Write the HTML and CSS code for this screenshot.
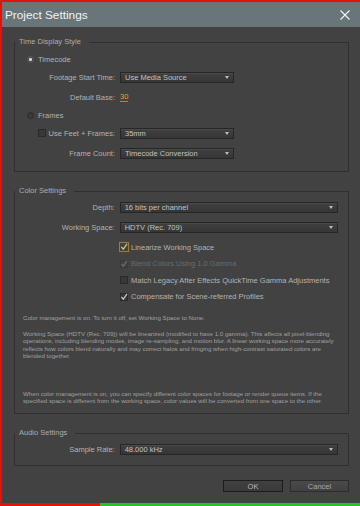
FILE: index.html
```html
<!DOCTYPE html>
<html lang="en">
<head>
    <meta charset="UTF-8">
    <meta name="viewport" content="width=device-width, initial-scale=1.0">
    <title>Project Settings</title>
    <link rel="stylesheet" href="styles.css">
</head>
<body>
    <div class="screen">
        <div class="window">
            <div class="titlebar">
                <span class="title">Project Settings</span>
                <svg class="close" viewBox="0 0 10 10" width="10" height="10">
                    <path d="M0.5 0.5 L9.5 9.5 M9.5 0.5 L0.5 9.5" stroke="#f4f4f4" stroke-width="1.1" fill="none"/>
                </svg>
            </div>

            <div class="dialog">
                <!-- time display -->
                <fieldset class="group time">
                    <legend>Time Display Style</legend>
                    <div class="row radio-row"><span class="radio on"></span>Timecode</div>
                    <div class="row">
                        <span class="label">Footage Start Time:</span>
                        <div class="select"><span>Use Media Source</span><span class="arrow"></span></div>
                    </div>
                    <div class="row loose">
                        <span class="label">Default Base:</span>
                        <span class="value">30</span>
                    </div>
                    <div class="row radio-row"><span class="radio"></span>Frames</div>
                    <div class="row">
                        <span class="label"><span class="check"></span>Use Feet + Frames:</span>
                        <div class="select"><span>35mm</span><span class="arrow"></span></div>
                    </div>
                    <div class="row loose">
                        <span class="label">Frame Count:</span>
                        <div class="select"><span>Timecode Conversion</span><span class="arrow"></span></div>
                    </div>
                </fieldset>

                <!-- color -->
                <fieldset class="group color">
                    <legend>Color Settings</legend>
                    <div class="row">
                        <span class="label">Depth:</span>
                        <div class="select wide"><span>16 bits per channel</span><span class="arrow"></span></div>
                    </div>
                    <div class="row loose">
                        <span class="label">Working Space:</span>
                        <div class="select wide"><span>HDTV (Rec. 709)</span><span class="arrow"></span></div>
                    </div>
                    <div class="row check-row first">
                        <span class="check focus"><svg viewBox="0 0 8 8"><path d="M1.3 3.8 L3.3 6.2 L7 0.8" stroke="#d8c48a" stroke-width="1.2" fill="none"/></svg></span>
                        Linearize Working Space
                    </div>
                    <div class="row check-row disabled">
                        <span class="check off"><svg viewBox="0 0 8 8"><path d="M1.3 3.8 L3.3 6.2 L7 0.8" stroke="#6c6c6c" stroke-width="1.2" fill="none"/></svg></span>
                        Blend Colors Using 1.0 Gamma
                    </div>
                    <div class="row check-row">
                        <span class="check"></span>
                        Match Legacy After Effects QuickTime Gamma Adjustments
                    </div>
                    <div class="row check-row">
                        <span class="check"><svg viewBox="0 0 8 8"><path d="M1.3 3.8 L3.3 6.2 L7 0.8" stroke="#c8c8c8" stroke-width="1.2" fill="none"/></svg></span>
                        Compensate for Scene-referred Profiles
                    </div>
                    <p class="note first-note">Color management is on. To turn it off, set Working Space to None.</p>
                    <p class="note">Working Space (HDTV (Rec. 709)) will be linearized (modified to have 1.0 gamma). This affects all pixel-blending<br>operations, including blending modes, image re-sampling, and motion blur. A linear working space more accurately<br>reflects how colors blend naturally and may correct halos and fringing when high-contrast saturated colors are<br>blended together.</p>
                    <p class="note last-note">When color management is on, you can specify different color spaces for footage or render queue items. If the<br>specified space is different from the working space, color values will be converted from one space to the other.</p>
                </fieldset>

                <!-- audio -->
                <fieldset class="group audio">
                    <legend>Audio Settings</legend>
                    <div class="row">
                        <span class="label">Sample Rate:</span>
                        <div class="select wide"><span>48.000 kHz</span><span class="arrow"></span></div>
                    </div>
                </fieldset>

                <div class="buttons">
                    <button class="btn default">OK</button>
                    <button class="btn">Cancel</button>
                </div>
            </div>
        </div>
        <div class="strip"><span class="red"></span><span class="green"></span></div>
    </div>
</body>
</html>
```

FILE: styles.css
```css
* {
    box-sizing: border-box;
}
body {
    margin: 0;
    background-color: #424242;
    font-family: "Liberation Sans", Arial, sans-serif;
    font-size: 7.5px;
    color: #b2b2b2;
}
.screen {
    height: 506px;
    display: flex;
    flex-direction: column;
}
.window {
    flex: 1;
    display: flex;
    flex-direction: column;
    border-top: 2px solid #e3120b;
    border-left: 2px solid #e3120b;
    background-color: #424242;
}
.titlebar {
    height: 25px;
    flex: none;
    background-color: #68767a;
    display: flex;
    align-items: center;
    justify-content: space-between;
    padding: 0 10px 0 3px;
}
.title {
    font-size: 11.8px;
    color: #f2f2f2;
}
.close {
    display: block;
}
.dialog {
    padding: 10px 11px 0 12px;
}
.group {
    margin: 0;
    min-width: 0;
    border: 1px solid #2f2f2f;
    padding: 6.5px 10px 12.5px 0;
}
.group + .group {
    margin-top: 14px;
}
.color {
    padding-top: 6px;
    padding-bottom: 8.5px;
}
.audio {
    padding-top: 6px;
    padding-bottom: 10px;
}
legend {
    height: 10px;
    line-height: 10px;
    padding: 0 8px 0 4px;
    color: #acacac;
}
.row {
    display: flex;
    align-items: center;
    height: 11px;
}
.row + .row {
    margin-top: 7px;
}
.row.loose {
    margin-top: 9px;
}
.label {
    width: 100px;
    margin-right: 5px;
    display: flex;
    justify-content: flex-end;
    align-items: center;
    gap: 3px;
    white-space: nowrap;
}
.radio-row {
    padding-left: 12px;
    gap: 4px;
}
.radio {
    width: 7px;
    height: 7px;
    border-radius: 50%;
    border: 1px solid #2b2b2b;
    background-color: #3a3a3a;
}
.radio.on {
    border-color: #5c5c5c;
    background: radial-gradient(circle, #d4d4d4 0 1.3px, #444 1.8px);
}
.select {
    width: 114px;
    height: 11px;
    display: flex;
    align-items: center;
    justify-content: space-between;
    padding: 0 4px;
    color: #c2c2c2;
    background: linear-gradient(#404040, #363636);
    border: 1px solid #262626;
    box-shadow: inset 0 1px 0 #4a4a4a;
}
.select.wide {
    width: 219px;
}
.arrow {
    width: 0;
    height: 0;
    border-left: 2px solid transparent;
    border-right: 2px solid transparent;
    border-top: 3px solid #bdbdbd;
}
.value {
    color: #dca337;
    border-bottom: 1px solid #b5852c;
    line-height: 8px;
}
.check {
    width: 8px;
    height: 8px;
    flex: none;
    border: 1px solid #2a2a2a;
    background-color: #383838;
    display: flex;
}
.check svg {
    width: 8px;
    height: 8px;
    margin: -1px;
}
.check.focus {
    width: 10px;
    height: 10px;
    margin-left: -1px;
    margin-right: -1px;
    border-color: #9a7d3c;
    background-color: #46423a;
    align-items: center;
    justify-content: center;
}
.check.focus svg {
    margin: 0;
}
.check.off {
    background-color: #404040;
    border-color: #3a3a3a;
}
.check-row {
    padding-left: 105px;
    gap: 3px;
}
.row.check-row {
    margin-top: 5.5px;
}
.row.check-row.first {
    margin-top: 8.5px;
}
.disabled {
    color: #6a6a6a;
}
.note {
    margin: 8.75px 0 0;
    padding-left: 8px;
    font-size: 6.15px;
    line-height: 7.5px;
    color: #a0a0a0;
    white-space: nowrap;
}
.note.first-note {
    margin-top: 11.5px;
}
.note.last-note {
    margin-top: 30px;
}
.buttons {
    display: flex;
    justify-content: flex-end;
    gap: 7px;
    margin-top: 14px;
}
.btn {
    width: 59px;
    height: 12px;
    padding: 0;
    font-family: inherit;
    font-size: 7.5px;
    color: #a8a8a8;
    background: linear-gradient(#4a4a4a, #414141);
    border: 1px solid #2c2c2c;
}
.btn.default {
    width: 60px;
    color: #b8b8b8;
    background: linear-gradient(#404040, #3a3a3a);
    border-color: #1c1c1c;
}
.strip {
    height: 3px;
    flex: none;
    display: flex;
}
.red {
    width: 100px;
    background-color: #e3120b;
}
.green {
    flex: 1;
    background-color: #23c423;
}
```
